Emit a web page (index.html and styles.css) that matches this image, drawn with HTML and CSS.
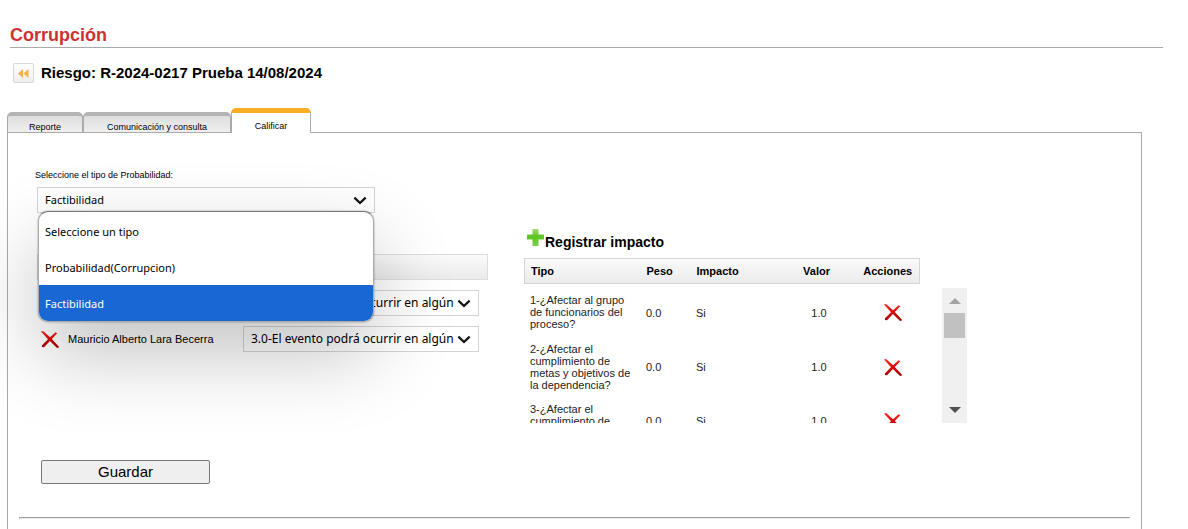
FILE: index.html
```
<!DOCTYPE html>
<html lang="es">
<head>
<meta charset="utf-8">
<title>Corrupción</title>
<link rel="stylesheet" href="styles.css">
</head>
<body>
<svg class="defs" aria-hidden="true">
  <defs>
    <linearGradient id="red" x1="0" y1="0" x2="0" y2="1"><stop offset="0" stop-color="#ff2a22"/><stop offset=".5" stop-color="#d80a08"/><stop offset="1" stop-color="#a00000"/></linearGradient>
    <linearGradient id="green" x1="0" y1="0" x2="0" y2="1"><stop offset="0" stop-color="#a5dc78"/><stop offset=".45" stop-color="#5cc420"/><stop offset="1" stop-color="#7ed04a"/></linearGradient>
    <symbol id="cross" viewBox="0 0 18 17"><path d="M0 .5L1.500 0 3 .8 9 6.200 14.500 1.300 16.300 2.300 10.800 8 18 15.700 17.200 17 15.800 16.700 8.900 10 3 16.300 1 16 .8 14.500 7 8.200z" fill="url(#red)"/></symbol>
    <symbol id="plus" viewBox="0 0 17 17"><path d="M5.500 0h6v5.500H17v5h-5.500V17h-6v-6.500H0v-5h5.500z" fill="url(#green)"/></symbol>
    <symbol id="chevron" viewBox="0 0 12 8"><path d="M1 1.500l5 4.700 5-4.700" fill="none" stroke="#111" stroke-width="2"/></symbol>
  </defs>
</svg>
<header class="page-header">
  <h1 class="page-title">Corrupción</h1>
</header>
<div class="risk">
  <button class="back" type="button" aria-label="Volver"><svg width="11" height="9" viewBox="0 0 11 9"><path d="M5 0v9L0 4.500zM10.500 0v9L5.500 4.500z" fill="#f6b04a"/></svg></button>
  <h2 class="risk-title">Riesgo: R-2024-0217 Prueba 14/08/2024</h2>
</div>
<nav class="tabs">
  <button class="tab tab-report" type="button">Reporte</button>
  <button class="tab tab-comm" type="button">Comunicación y consulta</button>
  <button class="tab tab-active" type="button">Calificar</button>
</nav>
<main class="panel">
  <label class="field-label" for="tipo">Seleccione el tipo de Probabilidad:</label>
  <div class="type-field">
    <div class="select-box">
      <select id="tipo" class="select select-type"><option>Seleccione un tipo</option><option>Probabilidad(Corrupcion)</option><option selected>Factibilidad</option></select>
      <svg class="chevron" width="14" height="9"><use href="#chevron"/></svg>
    </div>
    <ul class="menu">
      <li class="menu-item">Seleccione un tipo</li>
      <li class="menu-item">Probabilidad(Corrupcion)</li>
      <li class="menu-item menu-selected">Factibilidad</li>
    </ul>
  </div>
  <div class="columns">
    <section class="people">
      <div class="add-row"><svg width="17" height="17"><use href="#plus"/></svg></div>
      <div class="bar"></div>
      <div class="person">
        <button class="icon-button" type="button" aria-label="Eliminar"><svg width="18" height="17"><use href="#cross"/></svg></button>
        <span class="person-name"></span>
        <div class="select-box">
          <select class="select" aria-label="Calificación 1"><option>3.0-El evento podrá ocurrir en algún</option></select>
          <svg class="chevron" width="14" height="9"><use href="#chevron"/></svg>
        </div>
      </div>
      <div class="person">
        <button class="icon-button" type="button" aria-label="Eliminar"><svg width="18" height="17"><use href="#cross"/></svg></button>
        <label class="person-name" for="calif">Mauricio Alberto Lara Becerra</label>
        <div class="select-box">
          <select id="calif" class="select"><option>3.0-El evento podrá ocurrir en algún</option></select>
          <svg class="chevron" width="14" height="9"><use href="#chevron"/></svg>
        </div>
      </div>
    </section>
    <section class="impact">
      <div class="add-row"><svg width="17" height="17"><use href="#plus"/></svg><h3 class="add-title">Registrar impacto</h3></div>
      <table class="grid grid-head">
        <tr><th class="c-type">Tipo</th><th class="c-weight">Peso</th><th class="c-impact">Impacto</th><th class="c-value">Valor</th><th class="c-action">Acciones</th></tr>
      </table>
      <div class="scroller">
        <div class="viewport">
          <table class="grid grid-body">
            <tr><td class="c-type">1-¿Afectar al grupo de funcionarios del proceso?</td><td class="c-weight">0.0</td><td class="c-impact">Si</td><td class="c-value">1.0</td><td class="c-action"><button class="icon-button" type="button" aria-label="Eliminar"><svg width="18" height="17"><use href="#cross"/></svg></button></td></tr>
            <tr><td class="c-type">2-¿Afectar el cumplimiento de metas y objetivos de la dependencia?</td><td class="c-weight">0.0</td><td class="c-impact">Si</td><td class="c-value">1.0</td><td class="c-action"><button class="icon-button" type="button" aria-label="Eliminar"><svg width="18" height="17"><use href="#cross"/></svg></button></td></tr>
            <tr><td class="c-type">3-¿Afectar el cumplimiento de</td><td class="c-weight">0.0</td><td class="c-impact">Si</td><td class="c-value">1.0</td><td class="c-action"><button class="icon-button" type="button" aria-label="Eliminar"><svg width="18" height="17"><use href="#cross"/></svg></button></td></tr>
          </table>
        </div>
        <div class="scrollbar" aria-hidden="true">
          <svg width="12" height="6" viewBox="0 0 12 6"><path d="M0 6l6-6 6 6z" fill="#a3a3a3"/></svg>
          <div class="thumb"></div>
          <svg class="arrow-down" width="12" height="6" viewBox="0 0 12 6"><path d="M0 0l6 6 6-6z" fill="#505050"/></svg>
        </div>
      </div>
    </section>
  </div>
  <button class="save" type="button">Guardar</button>
  <hr class="rule">
</main>
</body>
</html>
```
FILE: styles.css
```
* { box-sizing: border-box; }
html, body { height: 100%; }
body {
  margin: 0;
  display: flex;
  flex-direction: column;
  overflow: hidden;
  background: #fff;
  color: #000;
  font: 11px/12px "Liberation Sans", Arial, sans-serif;
}
button { font-family: inherit; color: inherit; }
svg { display: block; flex: none; }
.defs { position: absolute; width: 0; height: 0; }
h1, h2, h3 { margin: 0; }

.page-header {
  margin: 0 25px 0 10px;
  padding: 24px 0 1px;
  border-bottom: 1px solid #aaa;
}
.page-title { font-size: 18px; line-height: 22px; color: #cd3232; }
.risk {
  display: flex;
  align-items: center;
  gap: 7px;
  margin: 15px 0 0 13px;
}
.back {
  display: grid;
  place-items: center;
  width: 21px;
  height: 20px;
  padding: 0;
  border: 1px solid #d8d8dc;
  border-radius: 2px;
  background: linear-gradient(#fff, #eee);
}
.risk-title { font-size: 15px; line-height: 20px; }

.tabs {
  display: flex;
  align-items: flex-end;
  margin: 25px 0 0 7px;
}
.tab {
  height: 21px;
  padding: 4px 0 0;
  border: 1px solid #aaa;
  border-top: 4px solid #b4b4b4;
  border-bottom: 0;
  border-radius: 5px 5px 0 0;
  background: linear-gradient(#dedede, #f0f0f0);
  font-size: 9px;
  line-height: 10px;
}
.tab-report { width: 76px; }
.tab-comm { width: 148px; }
.tab-active {
  position: relative;
  z-index: 1;
  width: 80px;
  height: 25px;
  padding-top: 6px;
  border-top: 5px solid #fbad24;
  background: #fff;
}
.panel {
  flex: 1 0 auto;
  display: flex;
  flex-direction: column;
  align-items: flex-start;
  margin: -1px 46px 0 7px;
  border: 1px solid #aaa;
  border-bottom: 0;
}
.field-label {
  margin: 36px 0 0 27px;
  font-size: 9px;
  line-height: 12px;
}
.type-field { position: relative; z-index: 2; width: 338px; margin: 6px 0 0 29px; }
.select-box {
  display: grid;
  grid-template-columns: 1fr 22px;
  align-items: center;
}
.select {
  grid-area: 1 / 1 / 2 / 3;
  width: 100%;
  height: 26px;
  margin: 0;
  padding: 0 20px 0 7px;
  appearance: none;
  border: 1px solid #d5d5d5;
  border-radius: 0;
  background: transparent;
  color: #000;
  font: 12px/16px "Noto Sans", sans-serif;
}
.select-type { font-size: 11px; }
.chevron { grid-area: 1 / 2; pointer-events: none; }
.menu {
  position: absolute;
  top: 24px;
  left: 1px;
  right: 1px;
  margin: 0;
  padding: 1px 0 0;
  overflow: hidden;
  list-style: none;
  border: 1px solid #aaa;
  border-top-color: #777;
  border-radius: 10px;
  background: #fff;
  box-shadow: 0 0 2px rgba(0, 0, 0, .4), 0 32px 80px rgba(0, 0, 0, .24);
  font: 11px/37px "Noto Sans", sans-serif;
}
.menu-item { height: 36px; padding-left: 6px; }
.menu-selected { background: #1967d2; color: #fff; }

.columns { display: flex; align-items: flex-start; margin: 16px 0 0 29px; }
.people { width: 451px; }
.impact { margin-left: 36px; }
.add-row { display: flex; gap: 1px; height: 29px; padding-left: 3px; }
.people .add-row { padding-left: 1px; }
.add-title { padding-top: 5px; font-size: 14px; line-height: 16px; }
.bar { height: 26px; margin-top: -4px; border: 1px solid #ddd; background: linear-gradient(#fafafa, #ebebeb); }
.person {
  display: grid;
  grid-template-columns: 27px 175px 236px;
  align-items: center;
  margin-top: 10px;
  padding-left: 4px;
}
.icon-button { padding: 0; border: 0; background: none; }

.grid { border-collapse: collapse; table-layout: fixed; width: 396px; }
.grid th, .grid td { padding: 0 0 0 6px; text-align: left; }
.grid-head { height: 26px; border: 1px solid #d5d5d5; background: linear-gradient(#fafafa, #ebebeb); }
.grid-body { color: #222; }
.grid .c-type { width: 116px; }
.grid-body tr { height: 49px; }
.grid-body tr + tr { height: 60px; }
.grid-body td { padding: 6px 0 6px 6px; }
.grid-body td.c-type { padding-right: 6px; vertical-align: top; }
.c-weight { width: 50px; }
.c-impact { width: 86px; }
.grid .c-value { width: 80px; text-align: center; }
.grid .c-action { text-align: center; }
.grid th.c-value, .grid th.c-action { padding-left: 0; }
.grid-body td.c-action { padding-left: 10px; }
.grid-body tr:last-child { height: 48px; }
.grid-body .c-action .icon-button { display: inline-block; vertical-align: middle; }
.scroller { display: flex; gap: 22px; height: 135px; margin-top: 4px; }
.viewport { overflow: hidden; }
.scrollbar {
  display: flex;
  flex-direction: column;
  align-items: center;
  width: 25px;
  padding: 10px 2px;
  background: #f0f0f0;
}
.thumb { width: 21px; height: 25px; margin-top: 9px; background: #c1c1c1; }
.arrow-down { margin-top: auto; }

.save {
  width: 169px;
  height: 24px;
  margin: 37px 0 0 33px;
  padding: 0;
  border: 1px solid #767676;
  border-radius: 2px;
  background: #efefef;
  font-size: 15px;
  line-height: 20px;
}
.rule {
  align-self: stretch;
  margin: 33px 11px 0;
  border: 1px inset #eee;
}
```
